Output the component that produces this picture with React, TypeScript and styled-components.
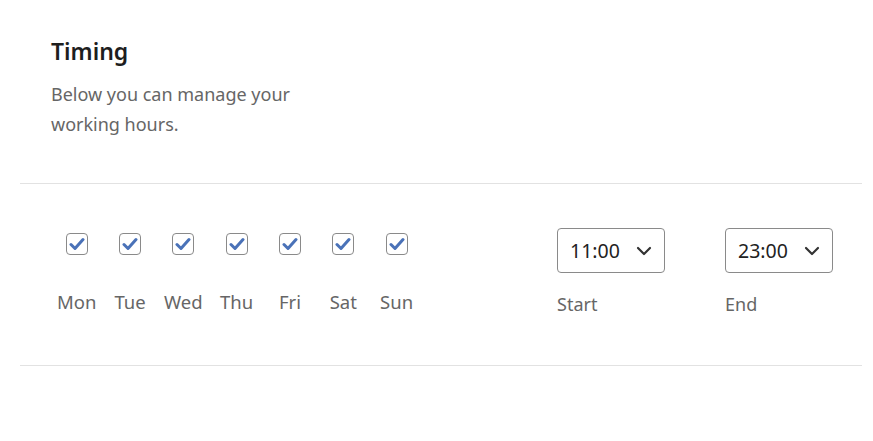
import React, { useState } from 'react';
import styled, { createGlobalStyle } from 'styled-components';

const GlobalStyle = createGlobalStyle`
  html, body {
    margin: 0;
    padding: 0;
    background: #ffffff;
    font-family: 'Noto Sans', 'Open Sans', sans-serif;
  }
`;

const Page = styled.div`
  width: 873px;
  height: 441px;
  padding: 0 11px 0 20px;
  box-sizing: border-box;
`;

const Header = styled.header`
  padding: 35px 0 44px 31px;
  border-bottom: 1px solid #e2e2e2;
`;

const Title = styled.h2`
  margin: 0;
  font-size: 23px;
  line-height: 32px;
  font-weight: 600;
  color: #1e1e1e;
`;

const Description = styled.p`
  margin: 12px 0 0;
  width: 270px;
  font-size: 18px;
  line-height: 30px;
  color: #666666;
`;

const Row = styled.section`
  display: flex;
  align-items: flex-start;
  justify-content: space-between;
  padding: 44px 29px 48px 30px;
  border-bottom: 1px solid #e2e2e2;
`;

const Days = styled.div`
  display: grid;
  grid-template-columns: repeat(7, 53.33px);
`;

const Day = styled.label`
  display: flex;
  flex-direction: column;
  align-items: center;
  gap: 34px;
  cursor: pointer;
`;

const Box = styled.span<{ $checked: boolean }>`
  width: 22px;
  height: 22px;
  box-sizing: border-box;
  border: 1px solid #8a8a8a;
  border-radius: 4px;
  display: flex;
  align-items: center;
  justify-content: center;
  background: #fff;
  margin-top: 5px;
  svg {
    visibility: ${(p) => (p.$checked ? 'visible' : 'hidden')};
  }
`;

const DayName = styled.span`
  font-size: 18.5px;
  line-height: 26px;
  color: #666666;
`;

const Times = styled.div`
  display: flex;
  gap: 60px;
`;

const TimeField = styled.div`
  display: flex;
  flex-direction: column;
  gap: 18px;
`;

const Select = styled.div`
  width: 108px;
  height: 45px;
  box-sizing: border-box;
  border: 1px solid #8a8a8a;
  border-radius: 4px;
  display: flex;
  align-items: center;
  justify-content: space-between;
  padding: 0 12px 0 12px;
  font-size: 19.5px;
  color: #222;
`;

const FieldLabel = styled.span`
  font-size: 18px;
  line-height: 26px;
  color: #666666;
`;

const Check = () => (
  <svg width="16" height="14" viewBox="0 0 16 14">
    <path d="M2 7.5 L6 11.5 L14 2.5" fill="none" stroke="#4a72b8" strokeWidth="3" strokeLinecap="round" strokeLinejoin="round" />
  </svg>
);

const Chevron = () => (
  <svg width="16" height="10" viewBox="0 0 16 10">
    <path d="M2 2 L8 8 L14 2" fill="none" stroke="#333" strokeWidth="2.2" strokeLinecap="round" strokeLinejoin="round" />
  </svg>
);

const days = ['Mon', 'Tue', 'Wed', 'Thu', 'Fri', 'Sat', 'Sun'];

export default function App() {
  const [checked, setChecked] = useState<boolean[]>(days.map(() => true));

  const toggle = (i: number) => {
    setChecked((prev) => prev.map((v, idx) => (idx === i ? !v : v)));
  };

  return (
    <>
      <GlobalStyle />
      <Page>
        <Header>
          <Title>Timing</Title>
          <Description>Below you can manage your working hours.</Description>
        </Header>
        <Row>
          <Days>
            {days.map((d, i) => (
              <Day key={d} onClick={() => toggle(i)}>
                <Box $checked={checked[i]}>
                  <Check />
                </Box>
                <DayName>{d}</DayName>
              </Day>
            ))}
          </Days>
          <Times>
            <TimeField>
              <Select>
                11:00 <Chevron />
              </Select>
              <FieldLabel>Start</FieldLabel>
            </TimeField>
            <TimeField>
              <Select>
                23:00 <Chevron />
              </Select>
              <FieldLabel>End</FieldLabel>
            </TimeField>
          </Times>
        </Row>
      </Page>
    </>
  );
}
